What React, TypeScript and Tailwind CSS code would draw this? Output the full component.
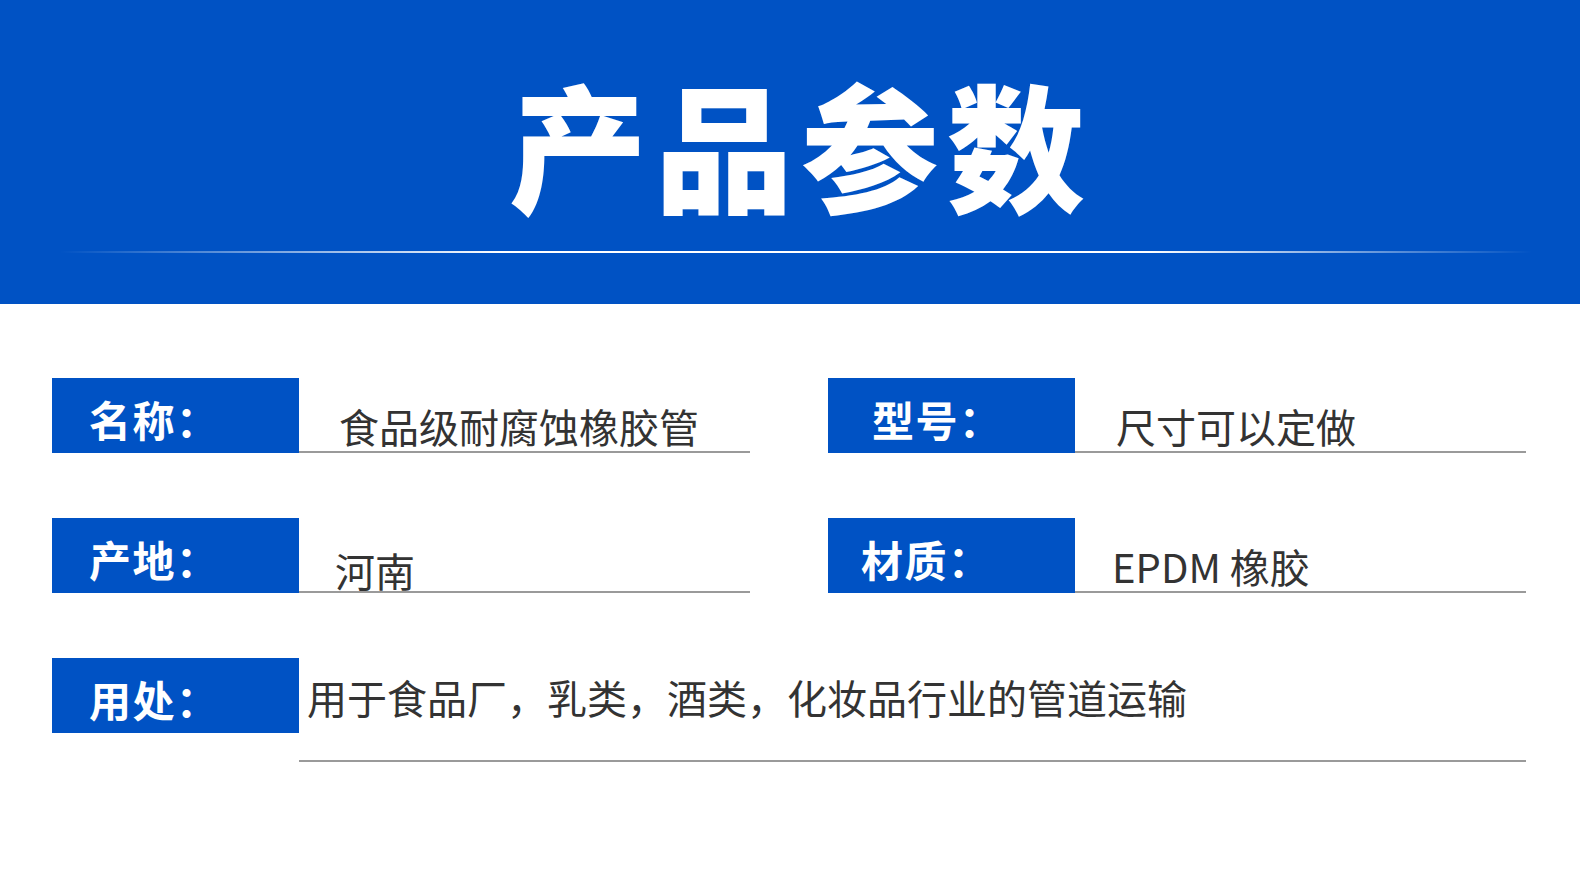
const font = { fontFamily: '"Noto Sans CJK SC", "Noto Sans", sans-serif' };

function Label({ text, pad }: { text: string; pad: string }) {
  return (
    <div
      className={`w-[247px] h-[75px] shrink-0 bg-[#0052c4] flex items-center pt-[6px] ${pad}`}
    >
      <span className="text-white text-[42px] font-bold leading-none tracking-[1.5px]">
        {text}
      </span>
    </div>
  );
}

export default function App() {
  return (
    <div className="w-[1580px] h-[880px] bg-white overflow-hidden" style={font}>
      <header className="h-[304px] bg-[#0052c4] flex flex-col items-center">
        <h1 className="mt-[73px] text-white text-[138px] font-black leading-none tracking-[8px] pl-[22px]">
          产品参数
        </h1>
        <div className="mt-[40px] ml-[12px] w-[1472px] h-[2px] bg-[linear-gradient(90deg,transparent_0%,white_30%,white_74%,transparent_100%)]" />
      </header>

      <section className="px-[52px] pt-[74px] flex flex-col gap-[65px] text-[#333]">
        <div className="grid grid-cols-2 gap-x-[78px] gap-y-[65px] pr-[2px]">
          <div className="flex">
            <Label text="名称：" pad="pl-[37px]" />
            <div className="flex-1 h-[75px] border-b-2 border-[#9a9a9a] flex items-end pl-[40px] pb-[5px]">
              <span className="text-[40px] leading-none">食品级耐腐蚀橡胶管</span>
            </div>
          </div>
          <div className="flex">
            <Label text="型号：" pad="pl-[44px]" />
            <div className="flex-1 h-[75px] border-b-2 border-[#9a9a9a] flex items-end pl-[41px] pb-[5px]">
              <span className="text-[40px] leading-none">尺寸可以定做</span>
            </div>
          </div>
          <div className="flex">
            <Label text="产地：" pad="pl-[37px]" />
            <div className="flex-1 h-[75px] border-b-2 border-[#9a9a9a] flex items-end pl-[36px] pb-[1px]">
              <span className="text-[40px] leading-none">河南</span>
            </div>
          </div>
          <div className="flex">
            <Label text="材质：" pad="pl-[33px]" />
            <div className="flex-1 h-[75px] border-b-2 border-[#9a9a9a] flex items-end pl-[37px] pb-[5px]">
              <span className="text-[40px] leading-none">EPDM 橡胶</span>
            </div>
          </div>
        </div>

        <div className="flex pr-[2px]">
          <Label text="用处：" pad="pl-[37px]" />
          <div className="flex-1 h-[104px] border-b-2 border-[#9a9a9a] pl-[8px] pt-[19px]">
            <span className="text-[40px] leading-none">
              用于食品厂，乳类，酒类，化妆品行业的管道运输
            </span>
          </div>
        </div>
      </section>
    </div>
  );
}
